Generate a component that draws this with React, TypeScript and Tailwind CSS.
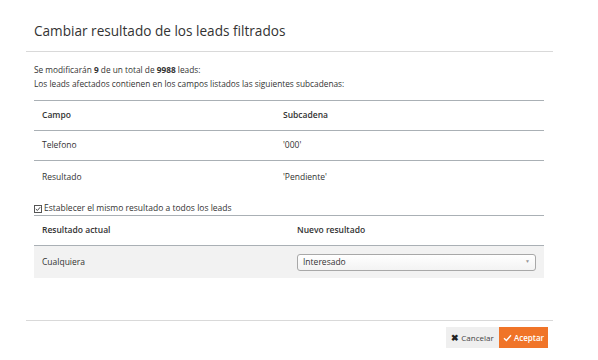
import React from "react";

export default function App() {
  return (
    <div
      className="w-[598px] h-[360px] bg-white text-[#333] overflow-hidden"
      style={{ fontFamily: '"Open Sans", "Noto Sans", sans-serif' }}
    >
      <div className="h-[52px] ml-[26px] mr-[45px] border-b border-[#d9d9d9] flex items-center pl-[8px] pt-[10px]">
        <h1 className="text-[13.6px] leading-none text-[#333]">Cambiar resultado de los leads filtrados</h1>
      </div>
      <div className="pl-[34px] pr-[54px]">
        <div className="pt-[11px] text-[8.3px] leading-[14px]">
          <div>
            Se modificarán <b className="font-bold">9</b> de un total de <b className="font-bold">9988</b> leads:
          </div>
          <div>Los leads afectados contienen en los campos listados las siguientes subcadenas:</div>
        </div>
        <div className="mt-[9px] border-t border-[#aab0b5] text-[8.5px]">
          <div className="flex h-[30px] items-center border-b border-[#aab0b5] font-semibold">
            <div className="w-[241px] pl-[8px]">Campo</div>
            <div className="pl-[8px]">Subcadena</div>
          </div>
          <div className="flex h-[30px] items-center border-b border-[#aab0b5]">
            <div className="w-[241px] pl-[8px]">Telefono</div>
            <div className="pl-[8px]">'000'</div>
          </div>
          <div className="flex h-[32px] items-center">
            <div className="w-[241px] pl-[8px]">Resultado</div>
            <div className="pl-[8px]">'Pendiente'</div>
          </div>
        </div>
        <div className="mt-[9px] flex items-center text-[8.5px] h-[13px]">
          <span className="w-[8px] h-[8px] border border-[#555] mr-[2px] flex items-center justify-center">
            <svg width="6" height="6" viewBox="0 0 6 6">
              <path d="M0.8 3 L2.4 4.5 L5.2 1.2" fill="none" stroke="#333" strokeWidth="0.9" />
            </svg>
          </span>
          Establecer el mismo resultado a todos los leads
        </div>
        <div className="border-t border-[#aab0b5] text-[8.5px]">
          <div className="flex h-[30px] items-center border-b border-[#aab0b5] font-semibold">
            <div className="w-1/2 pl-[8px]">Resultado actual</div>
            <div className="w-1/2 pl-[8px]">Nuevo resultado</div>
          </div>
          <div className="flex h-[32px] items-center bg-[#f2f2f2]">
            <div className="w-1/2 pl-[8px]">Cualquiera</div>
            <div className="w-1/2 pl-[8px] pr-[8px]">
              <div className="h-[17px] rounded-[3px] border border-[#a8a8a8] bg-gradient-to-b from-white to-[#f3f3f3] flex items-center justify-between px-[5px]">
                <span>Interesado</span>
                <span className="text-[5px] text-[#999]">▼</span>
              </div>
            </div>
          </div>
        </div>
      </div>
      <div className="ml-[26px] mr-[45px] mt-[42px] border-t border-[#d9d9d9] flex justify-end pr-[5px] pt-[6px]">
        <button className="h-[21px] w-[53px] bg-[#efefef] text-[#444] text-[8px] flex items-center justify-center gap-[2px]">
          <span className="text-[9px] font-bold leading-none text-[#222]">✖</span>
          Cancelar
        </button>
        <button className="h-[21px] w-[49px] bg-[#f07428] text-white text-[8px] font-semibold flex items-center justify-center gap-[2px]">
          <svg width="9" height="8" viewBox="0 0 9 8">
            <path d="M1 4.2 L3.4 6.5 L8 1.2" fill="none" stroke="white" strokeWidth="1.4" />
          </svg>
          Aceptar
        </button>
      </div>
    </div>
  );
}
